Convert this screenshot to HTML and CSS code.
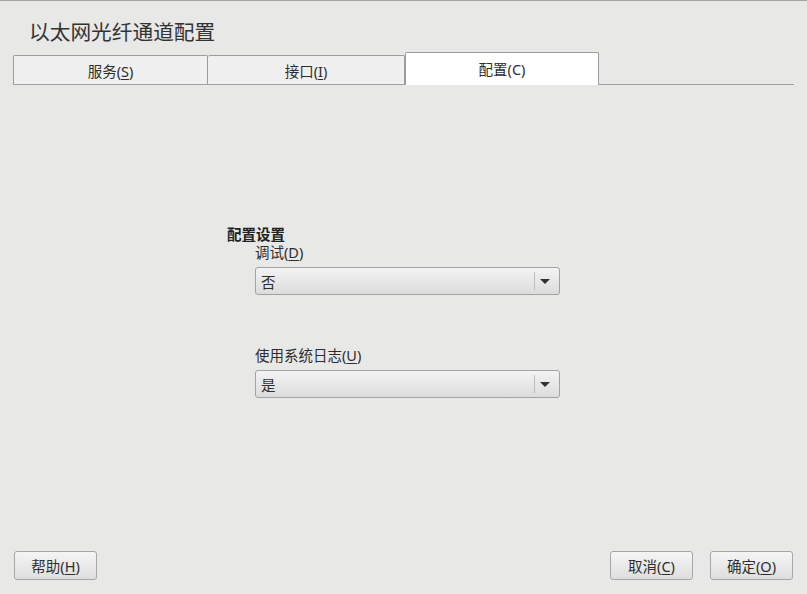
FILE: index.html
```html
<!DOCTYPE html>
<html lang="zh-CN">
<head>
<meta charset="utf-8">
<title>以太网光纤通道配置</title>
<link rel="stylesheet" href="styles.css">
</head>
<body>
<div class="window">
  <h1 class="title">以太网光纤通道配置</h1>
  <div class="tabs">
    <div class="tab tab-first">服务(<u>S</u>)</div>
    <div class="tab tab-second">接口(<u>I</u>)</div>
    <div class="tab tab-active">配置(C)</div>
  </div>
  <div class="content">
    <div class="form">
      <div class="section-title">配置设置</div>
      <div class="field">
        <div class="field-label">调试(<u>D</u>)</div>
        <div class="combo">
          <span class="combo-value">否</span>
          <span class="combo-sep"></span>
          <span class="combo-arrow"></span>
        </div>
      </div>
      <div class="field field-second">
        <div class="field-label">使用系统日志(<u>U</u>)</div>
        <div class="combo">
          <span class="combo-value">是</span>
          <span class="combo-sep"></span>
          <span class="combo-arrow"></span>
        </div>
      </div>
    </div>
  </div>
  <div class="buttons">
    <button class="btn">帮助(<u>H</u>)</button>
    <div class="spacer"></div>
    <button class="btn">取消(<u>C</u>)</button>
    <button class="btn">确定(<u>O</u>)</button>
  </div>
</div>
</body>
</html>
```
FILE: styles.css
```css
* { box-sizing: border-box; }
html, body {
  margin: 0;
  padding: 0;
  background: #e8e8e7;
}
body {
  font-family: "Noto Sans", "Noto Sans CJK SC", sans-serif;
  color: #2e2e2e;
  font-size: 14.5px;
}
.window {
  width: 807px;
  height: 594px;
  border-top: 1px solid #a4a4a4;
  display: flex;
  flex-direction: column;
}
.title {
  margin: 17px 0 0 29px;
  font-size: 20.7px;
  font-weight: normal;
  line-height: 28px;
  height: 28px;
  color: #333;
}
.tabs {
  margin: 6px 13px 0 13px;
  height: 33px;
  display: flex;
  align-items: flex-end;
  border-bottom: 1px solid #a0a0a0;
}
.tab {
  height: 29px;
  display: flex;
  align-items: center;
  justify-content: center;
  background: #f0f0f0;
  border: 1px solid #9c9c9c;
  border-bottom: none;
  border-radius: 2px 2px 0 0;
  line-height: 18px;
  padding-top: 1px;
}
.tab-first { width: 195px; }
.tab-second { width: 197px; border-left: none; }
.tab-active {
  width: 194px;
  height: 33px;
  margin-bottom: -1px;
  background: #ffffff;
  padding-bottom: 2px;
}
u {
  text-decoration: underline;
  text-underline-offset: 2px;
  text-decoration-thickness: 1px;
}
.content {
  flex: 1;
}
.form {
  margin: 140px 0 0 227px;
  width: 333px;
}
.section-title {
  font-weight: bold;
  line-height: 18px;
  height: 18px;
  color: #222;
}
.field {
  margin-left: 28px;
}
.field-second {
  margin-top: 51px;
}
.field-label {
  line-height: 18px;
  height: 18px;
}
.combo {
  margin-top: 6px;
  width: 305px;
  height: 28px;
  border: 1px solid #a2a2a2;
  border-radius: 3px;
  background: linear-gradient(#f3f3f3, #dcdcdc);
  display: flex;
  align-items: center;
  padding-left: 5px;
}
.combo-value {
  flex: 1;
  line-height: 18px;
  padding-top: 1px;
}
.combo-sep {
  width: 1px;
  height: 18px;
  background: #bdbdbd;
  margin-right: 3px;
}
.combo-arrow {
  width: 0;
  height: 0;
  border-left: 5px solid transparent;
  border-right: 5px solid transparent;
  border-top: 5px solid #333;
  margin-right: 9px;
  margin-left: 2px;
}
.buttons {
  display: flex;
  align-items: center;
  gap: 17px;
  padding: 0 14px 14px 14px;
}
.spacer { flex: 1; }
.btn {
  width: 83px;
  height: 29px;
  font-family: "Noto Sans", "Noto Sans CJK SC", sans-serif;
  font-size: 14.5px;
  color: #2e2e2e;
  border: 1px solid #a6a6a6;
  border-radius: 3px;
  background: linear-gradient(#f5f5f5, #dedede);
  padding: 1px 0 0 0;
  line-height: 18px;
}
```
